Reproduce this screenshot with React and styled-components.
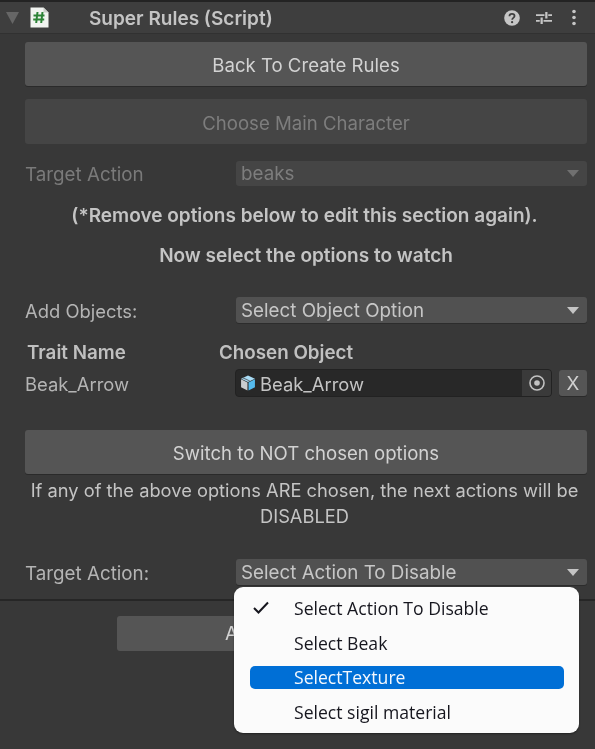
import React from "react";
import styled, { createGlobalStyle } from "styled-components";

const Global = createGlobalStyle`
  html, body { margin: 0; padding: 0; background: #383838; }
  body { font-family: Inter, "Liberation Sans", sans-serif; }
`;

const Page = styled.div`
  position: relative;
  width: 595px;
  height: 749px;
  overflow: hidden;
  background: #383838;
  color: #c4c4c4;
  font-size: 18.8px;
  filter: blur(0.35px);
`;

const Header = styled.header`
  height: 31px;
  margin-top: 2px;
  display: flex;
  align-items: center;
  background: #3e3e3e;
  border-bottom: 1px solid #313131;
  box-shadow: 0 -2px 0 #232323;
  padding: 0 18px 0 6px;
`;

const HeaderGap = styled.span`
  width: 11px;
`;

const Title = styled.span`
  font-weight: 600;
  font-size: 19px;
  color: #c4c4c4;
  margin-left: 40px;
  padding-top: 2px;
  flex: 1;
`;

const HeaderIcons = styled.div`
  display: flex;
  align-items: center;
  gap: 16px;
`;

const DotsSlot = styled.span`
  display: flex;
  margin-left: 3px;
`;

const Body = styled.main`
  padding: 8px 8px 0 25px;
  display: flex;
  flex-direction: column;
`;

const Button = styled.div`
  height: ${(p) => p.$h || 44}px;
  margin-top: ${(p) => p.$mt || 0}px;
  padding-top: ${(p) => (p.$disabled ? 3 : 2)}px;
  box-sizing: border-box;
  display: flex;
  align-items: center;
  justify-content: center;
  font-size: 18.6px;
  border-radius: 3px;
  background: ${(p) => (p.$disabled ? "#454545" : "#555555")};
  color: ${(p) => (p.$disabled ? "#7d7d7d" : "#d2d2d2")};
  box-shadow: ${(p) => (p.$disabled ? "none" : "0 1px 0 #2a2a2a")};
`;

const Row = styled.div`
  display: grid;
  grid-template-columns: 211px 1fr;
  align-items: center;
  margin-top: ${(p) => p.$mt || 0}px;
`;

const Label = styled.span`
  padding-top: 2px;
  font-size: ${(p) => p.$size || 18.8}px;
  color: ${(p) => (p.$disabled ? "#7a7a7a" : "#b4b4b4")};
`;

const Select = styled.div`
  height: ${(p) => p.$h || 26}px;
  display: flex;
  align-items: center;
  justify-content: space-between;
  padding: 0 8px 0 5px;
  border-radius: 3px;
  background: ${(p) => (p.$disabled ? "#454545" : "#515151")};
  color: ${(p) => (p.$disabled ? "#7d7d7d" : "#c6c6c6")};
  box-shadow: ${(p) => (p.$disabled ? "none" : "0 1px 0 #2c2c2c")};
`;

const Arrow = styled.span`
  width: 0;
  height: 0;
  border-left: 6px solid transparent;
  border-right: 6px solid transparent;
  border-top: 7px solid ${(p) => (p.$disabled ? "#707070" : "#c4c4c4")};
`;

const Notice = styled.p`
  margin: ${(p) => p.$mt || 0}px 0 0;
  padding-right: ${(p) => p.$inset ?? 3}px;
  text-align: center;
  font-weight: ${(p) => p.$weight || 400};
  font-size: ${(p) => p.$size || 18.3}px;
  line-height: 26px;
  color: #c4c4c4;
`;

const TableHead = styled.div`
  display: grid;
  grid-template-columns: 192px 1fr;
  margin-top: 19px;
  padding-left: 2px;
  font-weight: 600;
  line-height: 22px;
  color: #c0c0c0;
`;

const ObjectRow = styled.div`
  display: grid;
  grid-template-columns: 210px 317px 28px;
  align-items: center;
  margin-top: 5px;
`;

const ObjectField = styled.div`
  height: 28px;
  display: flex;
  align-items: center;
  background: #282828;
  border: 1px solid #222;
  border-radius: 4px;
  box-sizing: border-box;
  padding-left: 4px;
  gap: 4px;
  color: #c4c4c4;
`;

const ObjectName = styled.span`
  flex: 1;
  font-size: 18.4px;
  padding-top: 2px;
`;

const PickerSlot = styled.div`
  width: 29px;
  height: 100%;
  display: flex;
  align-items: center;
  justify-content: center;
  background: #3a3a3a;
  border-radius: 0 3px 3px 0;
`;

const RemoveButton = styled.div`
  height: 26px;
  margin-left: 7px;
  width: 28px;
  display: flex;
  align-items: center;
  justify-content: center;
  background: #555;
  color: #d0d0d0;
  border-radius: 3px;
  box-shadow: 0 1px 0 #2a2a2a;
`;

const Footer = styled.div`
  margin: 14px 0 0;
  border-top: 2px solid #262626;
  padding: 15px 0 0 117px;
`;

const FooterButton = styled.div`
  width: 361px;
  height: 35px;
  box-sizing: border-box;
  padding-left: 108px;
  border-radius: 3px;
  background: #555;
  color: #d2d2d2;
  display: flex;
  align-items: center;
`;

const Menu = styled.ul`
  position: absolute;
  left: 234px;
  top: 587px;
  width: 345px;
  height: 146px;
  box-sizing: border-box;
  margin: 0;
  padding: 9.5px 15px 0 16px;
  list-style: none;
  background: #fbfbfb;
  border-radius: 9px;
  box-shadow: 0 1px 2px rgba(0, 0, 0, 0.4);
  font-family: "Open Sans", "Noto Sans", sans-serif;
  font-size: 17.6px;
  color: #16161e;
`;

const MenuItem = styled.li`
  height: 23px;
  margin: 0 0 11.5px;
  padding-left: 44px;
  position: relative;
  display: flex;
  align-items: center;
  border-radius: 5px;
  background: ${(p) => (p.$active ? "#006fd6" : "transparent")};
  color: ${(p) => (p.$active ? "#f4f8fd" : "#16161e")};
`;

const Check = styled.svg`
  position: absolute;
  left: 2px;
  top: 3px;
`;

const ScriptIcon = () => (
  <svg width="19" height="21" viewBox="0 0 19 21">
    <path d="M0.5 0.5h13l5 5v15H0.5z" fill="#f1f3f0" />
    <path d="M13.5 0.5l5 5h-5z" fill="#c9cdc8" />
    <path d="M7.5 5l-1.3 11M12.5 5l-1.3 11M3.5 8.5h11M3.2 12.5h11" stroke="#2c8336" strokeWidth="2" fill="none" />
  </svg>
);

const CubeIcon = ({ size = 16 }) => (
  <svg width={size} height={size} viewBox="1 0.5 14 15">
    <path d="M8 1l6.5 3L8 7 1.5 4z" fill="#a9dcf6" />
    <path d="M1.5 4.5L7.5 7.5V15L1.5 12z" fill="#c9cdd0" />
    <path d="M8.5 7.5l6-3V12l-6 3z" fill="#55bbee" />
    <path d="M3 3l6.5 3" stroke="#606a70" strokeWidth="1" />
  </svg>
);

const PickerIcon = () => (
  <svg width="18" height="18" viewBox="0 0 18 18">
    <circle cx="9" cy="9" r="7" fill="none" stroke="#c2c2c2" strokeWidth="1.6" />
    <circle cx="9" cy="9" r="2.8" fill="#c2c2c2" />
  </svg>
);

const HelpIcon = () => (
  <svg width="16" height="16" viewBox="0 0 17 17">
    <circle cx="8.5" cy="8.5" r="8.3" fill="#c6c6c6" />
    <path d="M5.8 6.6c0-1.6 1.2-2.5 2.7-2.5s2.7.9 2.7 2.3c0 2-2.5 2-2.5 3.9" fill="none" stroke="#3e3e3e" strokeWidth="1.9" />
    <circle cx="8.6" cy="13" r="1.2" fill="#3e3e3e" />
  </svg>
);

const SlidersIcon = () => (
  <svg width="16" height="16" viewBox="0 0 17 16">
    <path d="M0 5h9M13 5h4M0 11h4M8 11h9" stroke="#c6c6c6" strokeWidth="2" />
    <path d="M11 1.5v7M6 7.5v7" stroke="#c6c6c6" strokeWidth="2.4" />
  </svg>
);

const DotsIcon = () => (
  <svg width="6" height="17" viewBox="0 0 6 17">
    <circle cx="3" cy="2.5" r="1.8" fill="#c6c6c6" />
    <circle cx="3" cy="8.5" r="1.8" fill="#c6c6c6" />
    <circle cx="3" cy="14.5" r="1.8" fill="#c6c6c6" />
  </svg>
);

const FoldIcon = () => (
  <svg width="13" height="12" viewBox="0 0 13 12">
    <path d="M0 0h13L6.5 12z" fill="#666666" />
  </svg>
);

export default function App() {
  return (
    <Page>
      <Global />
      <Header>
        <FoldIcon />
        <HeaderGap />
        <ScriptIcon />
        <Title>Super Rules (Script)</Title>
        <HeaderIcons>
          <HelpIcon />
          <SlidersIcon />
          <DotsSlot>
            <DotsIcon />
          </DotsSlot>
        </HeaderIcons>
      </Header>
      <Body>
        <Button $h={44}>Back To Create Rules</Button>
        <Button $h={45} $mt={13} $disabled>Choose Main Character</Button>
        <Row $mt={17}>
          <Label $disabled>Target Action</Label>
          <Select $disabled $h={25}>
            beaks
            <Arrow $disabled />
          </Select>
        </Row>
        <Notice $mt={17} $weight={600} $size={19}>(*Remove options below to edit this section again).</Notice>
        <Notice $mt={14} $weight={600} $size={19} $inset={0}>Now select the options to watch</Notice>
        <Row $mt={28}>
          <Label $size={18.4}>Add Objects:</Label>
          <Select>
            Select Object Option
            <Arrow />
          </Select>
        </Row>
        <TableHead>
          <span>Trait Name</span>
          <span>Chosen Object</span>
        </TableHead>
        <ObjectRow>
          <Label $size={18.4}>Beak_Arrow</Label>
          <ObjectField>
            <CubeIcon />
            <ObjectName>Beak_Arrow</ObjectName>
            <PickerSlot>
              <PickerIcon />
            </PickerSlot>
          </ObjectField>
          <RemoveButton>X</RemoveButton>
        </ObjectRow>
        <Button $h={44} $mt={33}>Switch to NOT chosen options</Button>
        <Notice $mt={3}>If any of the above options ARE chosen, the next actions will be DISABLED</Notice>
        <Row $mt={30}>
          <Label>Target Action:</Label>
          <Select>
            Select Action To Disable
            <Arrow />
          </Select>
        </Row>
      </Body>
      <Footer>
        <FooterButton>A</FooterButton>
      </Footer>
      <Menu>
        <MenuItem>
          <Check width="18" height="15" viewBox="0 0 18 15">
            <path d="M2 8l4.5 4.5L16 2.5" fill="none" stroke="#16161e" strokeWidth="2" />
          </Check>
          Select Action To Disable
        </MenuItem>
        <MenuItem>Select Beak</MenuItem>
        <MenuItem $active>SelectTexture</MenuItem>
        <MenuItem>Select sigil material</MenuItem>
      </Menu>
    </Page>
  );
}
